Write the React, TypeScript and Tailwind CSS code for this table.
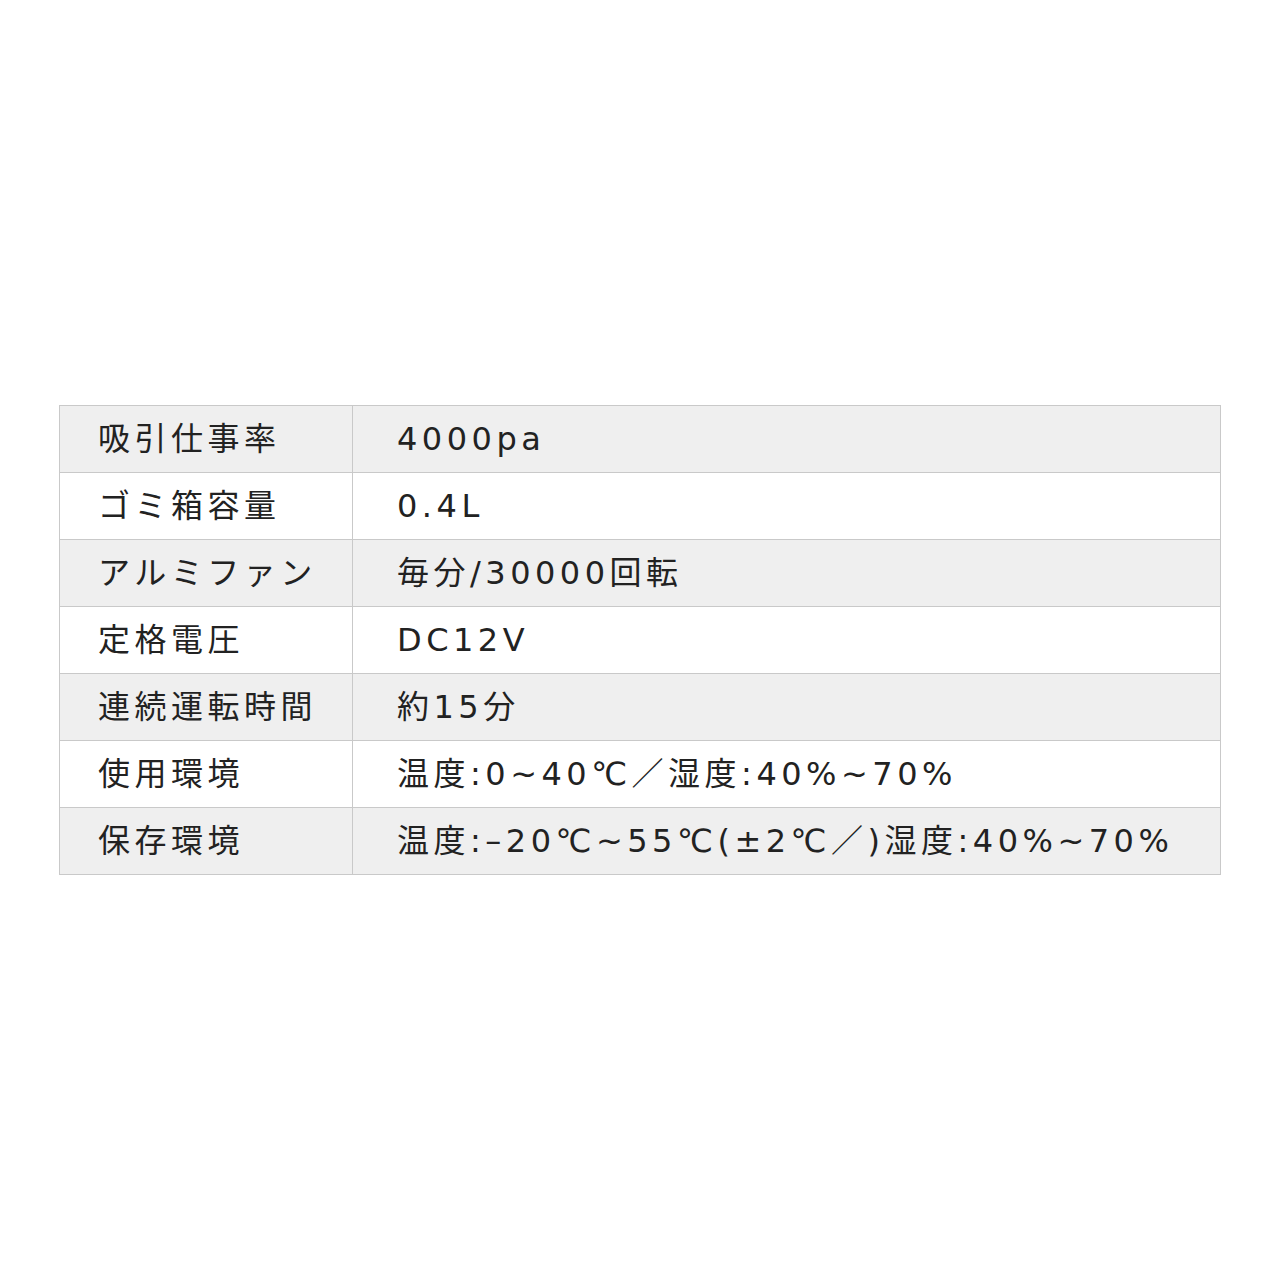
import React from 'react';

const rows: [string, string][] = [
  ['吸引仕事率', '4000pa'],
  ['ゴミ箱容量', '0.4L'],
  ['アルミファン', '毎分/30000回転'],
  ['定格電圧', 'DC12V'],
  ['連続運転時間', '約15分'],
  ['使用環境', '温度:0~40℃／湿度:40%~70%'],
  ['保存環境', '温度:–20℃~55℃(±2℃／)湿度:40%~70%'],
];

export default function App() {
  return (
    <div
      className="w-[1280px] h-[1280px] bg-white pt-[405px] px-[59px] text-[#222]"
      style={{ fontFamily: '"DejaVu Sans", "Noto Sans CJK JP", sans-serif' }}
    >
      <div className="border border-[#c9c9c9]">
        {rows.map(([label, value], i) => (
          <div
            key={label}
            className={
              'flex ' +
              (i % 2 === 0 ? 'bg-[#efefef] ' : 'bg-white ') +
              (i < rows.length - 1 ? 'h-[67px] border-b border-[#c9c9c9]' : 'h-[66px]')
            }
          >
            <div className="w-[293px] shrink-0 border-r border-[#c9c9c9] flex items-center pl-[38px] text-[32px] tracking-[4.5px] leading-none">
              {label}
            </div>
            <div className="flex-1 flex items-center pl-[44px] text-[32px] tracking-[4.5px] leading-none">
              {value}
            </div>
          </div>
        ))}
      </div>
    </div>
  );
}
